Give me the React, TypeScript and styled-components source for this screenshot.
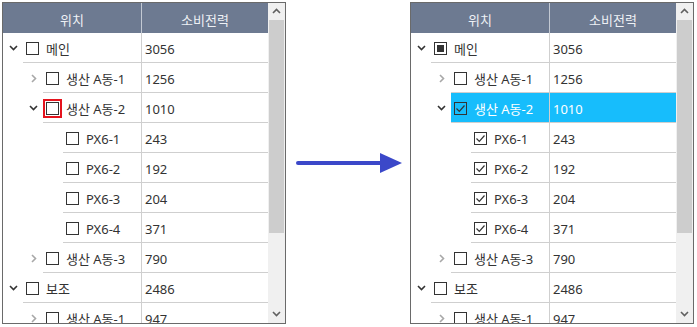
import React from 'react';
import styled, { createGlobalStyle } from 'styled-components';

const GlobalStyle = createGlobalStyle`
  html, body {
    margin: 0;
    padding: 0;
    background: #fff;
  }
  body {
    font-family: "Noto Sans", "Noto Sans CJK KR", sans-serif;
    font-size: 13px;
    color: #333;
  }
`;

type Node = {
  label: string;
  value: number;
  level: number;
  toggle?: 'open' | 'closed';
  check?: 'on' | 'off' | 'mixed';
  selected?: boolean;
  focused?: boolean;
};

const leftRows: Node[] = [
  { label: '메인', value: 3056, level: 0, toggle: 'open' },
  { label: '생산 A동-1', value: 1256, level: 1, toggle: 'closed' },
  { label: '생산 A동-2', value: 1010, level: 1, toggle: 'open', focused: true },
  { label: 'PX6-1', value: 243, level: 2 },
  { label: 'PX6-2', value: 192, level: 2 },
  { label: 'PX6-3', value: 204, level: 2 },
  { label: 'PX6-4', value: 371, level: 2 },
  { label: '생산 A동-3', value: 790, level: 1, toggle: 'closed' },
  { label: '보조', value: 2486, level: 0, toggle: 'open' },
  { label: '생산 A동-1', value: 947, level: 1, toggle: 'closed' },
];

// after checking 생산 A동-2: children checked, parent mixed
const rightRows: Node[] = leftRows.map((r, i) => {
  if (i === 0) return { ...r, check: 'mixed' };
  if (i === 2) return { ...r, check: 'on', selected: true, focused: false };
  if (i >= 3 && i <= 6) return { ...r, check: 'on' };
  return r;
});

const Page = styled.div`
  display: flex;
  align-items: flex-start;
  padding: 2px 0 0 2px;
`;

const Panel = styled.div`
  width: 282px;
  height: 320px;
  border: 1px solid #6a6a6a;
  display: flex;
  overflow: hidden;
`;

const Grid = styled.div`
  width: 265px;
  display: flex;
  flex-direction: column;
`;

const HeaderRow = styled.div`
  display: flex;
  height: 30px;
  background: #6d7a91;
  color: #eef1f5;
  flex-shrink: 0;
`;

const HeaderCell = styled.div<{ $w: number; $divider?: boolean }>`
  width: ${(p) => p.$w}px;
  display: flex;
  align-items: center;
  justify-content: center;
  padding-top: 2px;
  border-right: ${(p) => (p.$divider ? '1px solid #c3c9d3' : 'none')};
  box-sizing: border-box;
`;

const Row = styled.div`
  display: flex;
  height: 30px;
  flex-shrink: 0;
`;

const TreeCell = styled.div<{ $level: number }>`
  width: 139px;
  display: flex;
  padding-left: ${(p) => p.$level * 20}px;
  box-sizing: border-box;
  border-right: 1px solid #cfcfcf;
`;

const ToggleSlot = styled.div`
  width: 20px;
  display: flex;
  align-items: center;
  justify-content: center;
  padding-top: 1px;
`;

const TreeBody = styled.div<{ $selected?: boolean }>`
  flex: 1;
  display: flex;
  align-items: center;
  gap: 7px;
  padding: 2px 0 0 3px;
  border-bottom: 1px solid #cfcfcf;
  background: ${(p) => (p.$selected ? '#17bdfc' : 'transparent')};
  color: ${(p) => (p.$selected ? '#fff' : '#333')};
  white-space: nowrap;
`;

const ValueCell = styled.div<{ $selected?: boolean }>`
  flex: 1;
  display: flex;
  align-items: center;
  padding: 2px 0 0 3px;
  border-bottom: 1px solid #cfcfcf;
  background: ${(p) => (p.$selected ? '#17bdfc' : 'transparent')};
  color: ${(p) => (p.$selected ? '#fff' : '#333')};
`;

const Box = styled.span<{ $focused?: boolean; $selected?: boolean }>`
  width: 13px;
  height: 13px;
  box-sizing: border-box;
  border: 1px solid #333;
  background: ${(p) => (p.$selected ? 'transparent' : '#fff')};
  display: flex;
  align-items: center;
  justify-content: center;
  flex-shrink: 0;
  outline: ${(p) => (p.$focused ? '2px solid #e5131d' : 'none')};
  outline-offset: 1px;
`;

const Mixed = styled.span`
  width: 7px;
  height: 7px;
  background: #333;
`;

const Scrollbar = styled.div`
  width: 17px;
  background: #f0f0f0;
  display: flex;
  flex-direction: column;
`;

const ScrollButton = styled.div`
  height: 17px;
  display: flex;
  align-items: center;
  justify-content: center;
  flex-shrink: 0;
`;

const Thumb = styled.div`
  margin: 0 1px;
  height: 213px;
  background: #cdcdcd;
`;

const Spacer = styled.div`
  flex: 1;
`;

const ArrowSlot = styled.div`
  width: 124px;
  height: 322px;
  display: flex;
  align-items: center;
  padding-left: 10px;
  box-sizing: border-box;
`;

const Chevron: React.FC<{ dir: 'down' | 'right' | 'up'; color: string }> = ({ dir, color }) => {
  const d =
    dir === 'down' ? 'M1 2 L4.5 5.5 L8 2' : dir === 'up' ? 'M1 6 L4.5 2.5 L8 6' : 'M3 1 L6.5 4.5 L3 8';
  return (
    <svg width="9" height="9" viewBox="0 0 9 9">
      <path d={d} fill="none" stroke={color} strokeWidth="1.6" />
    </svg>
  );
};

const Check: React.FC = () => (
  <svg width="11" height="11" viewBox="0 0 11 11">
    <path d="M1.5 5.5 L4.3 8.3 L9.5 2.5" fill="none" stroke="#333" strokeWidth="1.2" />
  </svg>
);

const TreeRow: React.FC<{ node: Node }> = ({ node }) => (
  <Row>
    <TreeCell $level={node.level}>
      <ToggleSlot>
        {node.toggle === 'open' && <Chevron dir="down" color="#333" />}
        {node.toggle === 'closed' && <Chevron dir="right" color="#a8a8a8" />}
      </ToggleSlot>
      <TreeBody $selected={node.selected}>
        <Box $focused={node.focused} $selected={node.selected}>
          {node.check === 'on' && <Check />}
          {node.check === 'mixed' && <Mixed />}
        </Box>
        {node.label}
      </TreeBody>
    </TreeCell>
    <ValueCell $selected={node.selected}>{node.value}</ValueCell>
  </Row>
);

const TreeGrid: React.FC<{ rows: Node[] }> = ({ rows }) => (
  <Panel>
    <Grid>
      <HeaderRow>
        <HeaderCell $w={139} $divider>
          위치
        </HeaderCell>
        <HeaderCell $w={126}>소비전력</HeaderCell>
      </HeaderRow>
      {rows.map((r, i) => (
        <TreeRow key={i} node={r} />
      ))}
    </Grid>
    <Scrollbar>
      <ScrollButton>
        <Chevron dir="up" color="#606060" />
      </ScrollButton>
      <Thumb />
      <Spacer />
      <ScrollButton>
        <Chevron dir="down" color="#606060" />
      </ScrollButton>
    </Scrollbar>
  </Panel>
);

const Arrow: React.FC = () => (
  <svg width="108" height="24" viewBox="0 0 108 24">
    <line x1="2" y1="12" x2="86" y2="12" stroke="#3b48c9" strokeWidth="4" strokeLinecap="round" />
    <polygon points="84,2 106,12 84,22" fill="#3b48c9" />
  </svg>
);

export default function App() {
  return (
    <>
      <GlobalStyle />
      <Page>
        <TreeGrid rows={leftRows} />
        <ArrowSlot>
          <Arrow />
        </ArrowSlot>
        <TreeGrid rows={rightRows} />
      </Page>
    </>
  );
}
